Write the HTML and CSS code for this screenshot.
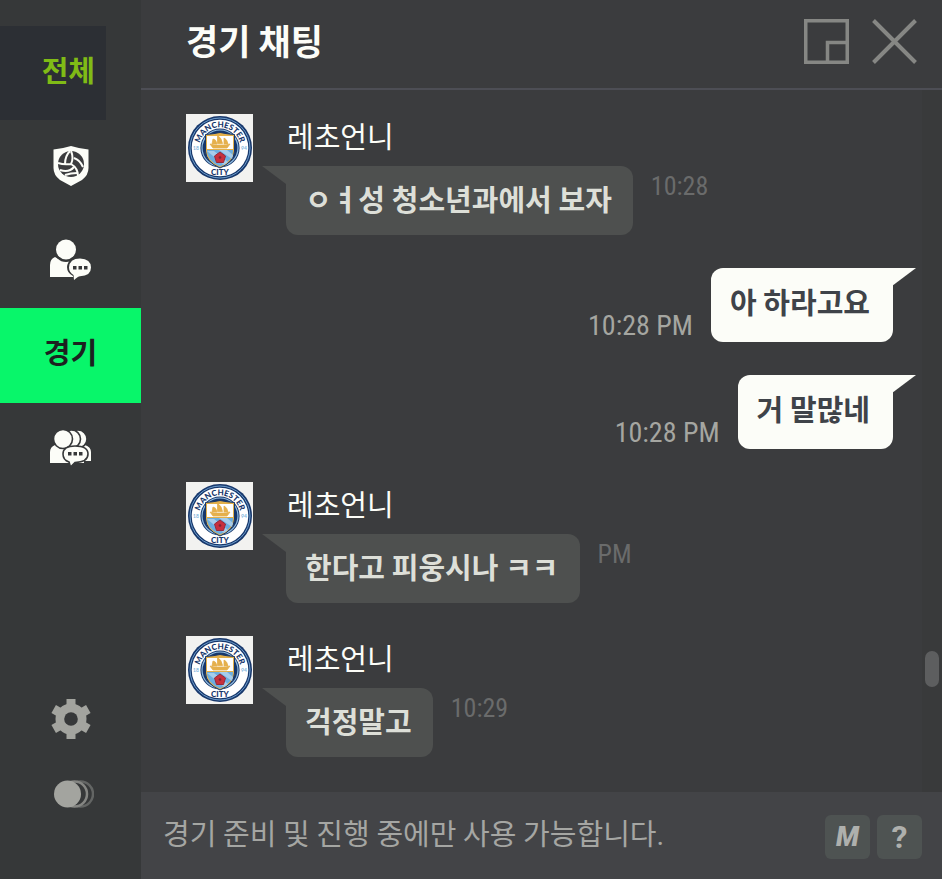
FILE: index.html
```html
<!DOCTYPE html>
<html lang="ko">
<head>
    <meta charset="UTF-8">
    <meta name="viewport" content="width=device-width, initial-scale=1.0">
    <title>경기 채팅</title>
    <link rel="stylesheet" href="styles.css">
</head>
<body>
    <nav class="sidebar">
        <button class="tab tab-all" type="button">전체</button>
        <button class="tab" type="button" aria-label="클럽">
            <svg width="36" height="40" viewBox="0 0 36 40">
                <path d="M.5 3.500Q10 2.500 18 0Q26 2.500 35.500 3.500V22Q35.500 29 29 34L18 40L7 34Q.5 29 .5 22Z" fill="#fcfdf8"/>
                <circle cx="18" cy="18" r="13" fill="#3b3c3e"/>
                <g fill="none" stroke="#fcfdf8" stroke-width="2">
                    <path d="M5 17Q11 19 18 18Q21 12 18 5M18 18Q25 22 25 30"/>
                    <path d="M12 18Q12 10 17 5M21 12Q27 14 30 21M21 21Q16 27 7 24M24 27Q18 27 12 29"/>
                </g>
            </svg>
        </button>
        <button class="tab" type="button" aria-label="귓속말">
            <svg width="42" height="41" viewBox="0 0 42 41">
                <path d="M0 38V26Q0 20 5 18Q11 23 20 20Q24 22 24 28V38Z" fill="#fcfdf8"/>
                <circle cx="16" cy="11" r="12" fill="#363839"/>
                <circle cx="16" cy="10.500" r="10" fill="#fcfdf8"/>
                <path d="M30 18Q42.500 18.500 42.500 28.500Q42 38 30 38.500L23 43V37Q17 34 17 28Q18 18 30 18Z" fill="#363839"/>
                <path d="M30 19.500Q41 20 41 28.500Q41 37 30 37.200Q28 37.500 24 41L23.500 36Q19 33 19 28.500Q19.500 19.500 30 19.500Z" fill="#fcfdf8"/>
                <path d="M23 27h3.500v3.500H23zM28.500 27H32v3.500h-3.500zM34 27h3.500v3.500H34z" fill="#363839"/>
            </svg>
        </button>
        <button class="tab tab-active" type="button" aria-current="true">경기</button>
        <button class="tab" type="button" aria-label="그룹">
            <svg width="42" height="37" viewBox="0 0 42 37">
                <path d="M0 33V22Q0 17 5 15H35Q41 17 41 22V31H34V33Z" fill="#fcfdf8"/>
                <g fill="#fcfdf8" stroke="#363839" stroke-width="1.600">
                    <circle cx="28" cy="9" r="9"/>
                    <circle cx="21.500" cy="9" r="9"/>
                    <circle cx="13" cy="9" r="9.500"/>
                </g>
                <path d="M25 16Q38 16 38 24Q38 32 25 32.500L20.500 37L19 32Q13 30 13 24Q13 16 25 16Z" fill="#fcfdf8" stroke="#363839" stroke-width="1.600"/>
                <path d="M18 22h3.500v3.500H18zM23.500 22H27v3.500h-3.500zM29 22h3.500v3.500H29z" fill="#363839"/>
            </svg>
        </button>
        <div class="tools">
            <button class="tool" type="button" aria-label="설정">
                <svg width="40" height="40" viewBox="0 0 40 40">
                    <g fill="#a3a49f">
                        <circle cx="20" cy="20" r="15.500"/>
                        <path id="tooth" d="M15.500 0h9v10h-9z"/>
                        <use href="#tooth" transform="rotate(60 20 20)"/>
                        <use href="#tooth" transform="rotate(120 20 20)"/>
                        <use href="#tooth" transform="rotate(180 20 20)"/>
                        <use href="#tooth" transform="rotate(240 20 20)"/>
                        <use href="#tooth" transform="rotate(300 20 20)"/>
                    </g>
                    <circle cx="20" cy="20" r="6.800" fill="#363839"/>
                </svg>
            </button>
            <button class="tool tool-opacity" type="button" aria-label="투명도">
                <svg width="40" height="28" viewBox="0 0 40 28">
                    <circle cx="26.500" cy="14" r="12.500" fill="#363839" stroke="#636564" stroke-width="2.500"/>
                    <circle cx="20.500" cy="14" r="12.500" fill="#363839" stroke="#858683" stroke-width="2.500"/>
                    <circle cx="13.500" cy="14" r="13.500" fill="#a3a49f"/>
                </svg>
            </button>
        </div>
    </nav>

    <main class="chat">
        <header class="chat-header">
            <h1>경기 채팅</h1>
            <button class="window-btn" type="button" aria-label="작게 보기">
                <svg width="45" height="45" viewBox="0 0 45 45" fill="none" stroke="#868784" stroke-width="3.500">
                    <path d="M1.750 1.750H43.250V43.250H1.750ZM23.500 43.250V23.500H43.250"/>
                </svg>
            </button>
            <button class="window-btn" type="button" aria-label="닫기">
                <svg width="45" height="45" viewBox="0 0 45 45" fill="none" stroke="#868784" stroke-width="4">
                    <path d="M1.500 1.500L43.500 43.500M43.500 1.500L1.500 43.500"/>
                </svg>
            </button>
        </header>

        <div class="chat-body">
            <div class="messages">
                <div class="msg">
                    <svg class="avatar" viewBox="0 0 67 68">
                        <!-- club badge, reused by the other avatars -->
                        <g id="badge">
                            <rect width="67" height="68" fill="#f2f2f0"/>
                            <circle cx="34" cy="34" r="32" fill="#17376b"/>
                            <circle cx="34" cy="34" r="30" fill="none" stroke="#6f9fce" stroke-width="1"/>
                            <circle cx="34" cy="34" r="28.300" fill="#fff"/>
                            <circle cx="34" cy="34" r="19.600" fill="#17376b"/>
                            <circle cx="34" cy="34" r="18" fill="none" stroke="#8fbbe0" stroke-width="1.200"/>
                            <path d="M19.500 20.500Q27 20 34 18.500Q41 20 48.500 20.500V37Q48 48 34 54Q20 48 19.500 37Z" fill="#e3b04b" stroke="#17376b" stroke-width="1"/>
                            <path d="M21 22H47V35H21Z" fill="#fff"/>
                            <path d="M21 36H47Q47 47 34 52.500Q21 47 21 36Z" fill="#6caee0"/>
                            <path d="M21 37l7 0 14 11-4 3zM33 36h8l6 5-1 4z" fill="#a6cdec"/>
                            <path d="M24 30l4 1h12l4-1-3 4H27zM27 25q3 0 4 5h-5zM31.500 21.500q4 2 5 8h-5zM38 24q3 1 4 6h-4z" fill="#e5b04c" stroke="#e5b04c" stroke-width=".8"/>
                            <path d="M34 38l5.500 4-2 6.500h-7l-2-6.500z" fill="#c8303d" stroke="#942a3b" stroke-width="1"/>
                            <circle cx="34" cy="43.500" r="1.300" fill="#7a2438"/>
                            <path id="arc" d="M13.300 34A20.700 20.700 0 0 1 54.700 34" fill="none"/>
                            <text class="badge-ring"><textPath href="#arc" startOffset="50%" text-anchor="middle">MANCHESTER</textPath></text>
                            <text class="badge-ring" x="34" y="60.500" text-anchor="middle">CITY</text>
                            <text class="badge-year" x="10" y="36" text-anchor="middle">18</text>
                            <text class="badge-year" x="58" y="36" text-anchor="middle">94</text>
                        </g>
                    </svg>
                    <div>
                        <div class="name">레초언니</div>
                        <div class="line">
                            <div class="bubble">ㅇㅕ성 청소년과에서 보자</div>
                            <time>10:28</time>
                        </div>
                    </div>
                </div>
                <div class="msg mine">
                    <time>10:28 PM</time>
                    <div class="bubble">아 하라고요</div>
                </div>
                <div class="msg mine">
                    <time>10:28 PM</time>
                    <div class="bubble">거 말많네</div>
                </div>
                <div class="msg">
                    <svg class="avatar" viewBox="0 0 67 68"><use href="#badge"/></svg>
                    <div>
                        <div class="name">레초언니</div>
                        <div class="line">
                            <div class="bubble">한다고 피웅시나 ㅋㅋ</div>
                            <time>PM</time>
                        </div>
                    </div>
                </div>
                <div class="msg">
                    <svg class="avatar" viewBox="0 0 67 68"><use href="#badge"/></svg>
                    <div>
                        <div class="name">레초언니</div>
                        <div class="line">
                            <div class="bubble">걱정말고</div>
                            <time>10:29</time>
                        </div>
                    </div>
                </div>
            </div>
            <div class="scrollbar"><div class="thumb"></div></div>
        </div>

        <footer class="chat-footer">
            <input class="chat-input" type="text" aria-label="메시지" placeholder="경기 준비 및 진행 중에만 사용 가능합니다." disabled>
            <button class="key key-macro" type="button">M</button>
            <button class="key" type="button">?</button>
        </footer>
    </main>
</body>
</html>
```

FILE: styles.css
```css
* {
    box-sizing: border-box;
}
body {
    margin: 0;
    min-height: 100vh;
    display: flex;
    background-color: #3b3c3e;
    color: #fcfdf8;
    font-family: "Roboto Condensed", "Noto Sans CJK KR", sans-serif;
    font-size: 29px;
}
button {
    border: 0;
    padding: 0;
    background: none;
    color: inherit;
    font: inherit;
    cursor: pointer;
}
svg {
    display: block;
}

/* sidebar */
.sidebar {
    flex: 0 0 141px;
    display: flex;
    flex-direction: column;
    padding-top: 26px;
    background-color: #363839;
}
.tab {
    height: 94px;
    padding-bottom: 3px;
    display: flex;
    align-items: center;
    justify-content: center;
    font-weight: bold;
    line-height: 40px;
}
.tab-all {
    width: 106px;
    justify-content: flex-end;
    padding-right: 11px;
    background-color: #2c2f34;
    color: #80bb16;
}
.tab-active {
    height: 95px;
    background-color: #08f66a;
    color: #1c211f;
}
.tools {
    margin-top: auto;
    padding-bottom: 71px;
    display: flex;
    flex-direction: column;
    align-items: center;
    gap: 41px;
}
.tool-opacity {
    padding-left: 6px;
}

/* header */
.chat {
    flex: 1;
    min-width: 0;
    display: flex;
    flex-direction: column;
}
.chat-header {
    display: flex;
    align-items: center;
    gap: 23px;
    height: 90px;
    padding: 0 25px 6px 45px;
    border-bottom: 2px solid #4d4e55;
}
.chat-header h1 {
    flex: 1;
    margin: 0;
    padding-top: 6px;
    font-size: 35px;
    line-height: 50px;
}

/* messages */
.chat-body {
    flex: 1;
    display: flex;
}
.messages {
    flex: 1;
    display: flex;
    flex-direction: column;
    gap: 33px;
    padding: 24px 29px 24px 45px;
}
.msg {
    display: flex;
    gap: 33px;
}
.avatar {
    width: 67px;
    height: 68px;
}
.badge-ring {
    font-family: Lato, sans-serif;
    font-weight: 900;
    font-size: 8px;
    fill: #17376b;
}
.badge-year {
    font-family: Lato, sans-serif;
    font-weight: bold;
    font-size: 5px;
    fill: #7fb4dc;
}
.name {
    line-height: 48px;
    padding: 0 0 4px 1px;
}
.line {
    display: flex;
    gap: 18px;
}
.bubble {
    position: relative;
    padding: 14px 21px 13px 19px;
    border-radius: 0 12px 12px 12px;
    background-color: #4e504f;
    color: #dddfd8;
    font-weight: bold;
    line-height: 42px;
}
.bubble::before {
    content: "";
    position: absolute;
    top: 0;
    left: -24px;
    width: 24px;
    height: 18px;
    background-color: inherit;
    clip-path: polygon(0 0, 100% 0, 100% 100%);
}
time {
    color: #6a6b6b;
    font-family: "Liberation Sans Narrow", "Roboto Condensed", sans-serif;
    font-size: 26px;
    line-height: 40px;
}
.mine {
    justify-content: flex-end;
    align-items: flex-end;
    gap: 18px;
}
.mine .bubble {
    padding: 15px 23px 17px 19px;
    border-radius: 12px 0 12px 12px;
    background-color: #fcfdf8;
    color: #3f4349;
}
.mine .bubble::before {
    left: auto;
    right: -23px;
    clip-path: polygon(0 0, 100% 0, 0 100%);
}
.mine time {
    color: #a5a6a1;
    font-size: 28px;
    line-height: 32px;
}
.scrollbar {
    flex: 0 0 20px;
    display: flex;
    flex-direction: column;
    justify-content: flex-end;
    align-items: center;
    padding-bottom: 105px;
    background-color: #393a3b;
}
.thumb {
    width: 14px;
    height: 36px;
    border-radius: 7px;
    background-color: #5d5e5f;
}

/* footer */
.chat-footer {
    display: flex;
    align-items: center;
    gap: 7px;
    height: 87px;
    padding: 3px 20px 0 22px;
    background-color: #434447;
}
.chat-input {
    flex: 1;
    min-width: 0;
    border: 0;
    padding: 0 0 4px;
    background: none;
    font: inherit;
}
.chat-input::placeholder {
    color: #a5a6a3;
    opacity: 1;
}
.key {
    width: 45px;
    height: 44px;
    border-radius: 6px;
    background-color: #4e5352;
    color: #aeb0ad;
    font-family: Roboto, sans-serif;
    font-size: 32px;
    font-weight: bold;
    line-height: 44px;
}
.key-macro {
    font-size: 27px;
    font-weight: 900;
    font-style: italic;
}
```
